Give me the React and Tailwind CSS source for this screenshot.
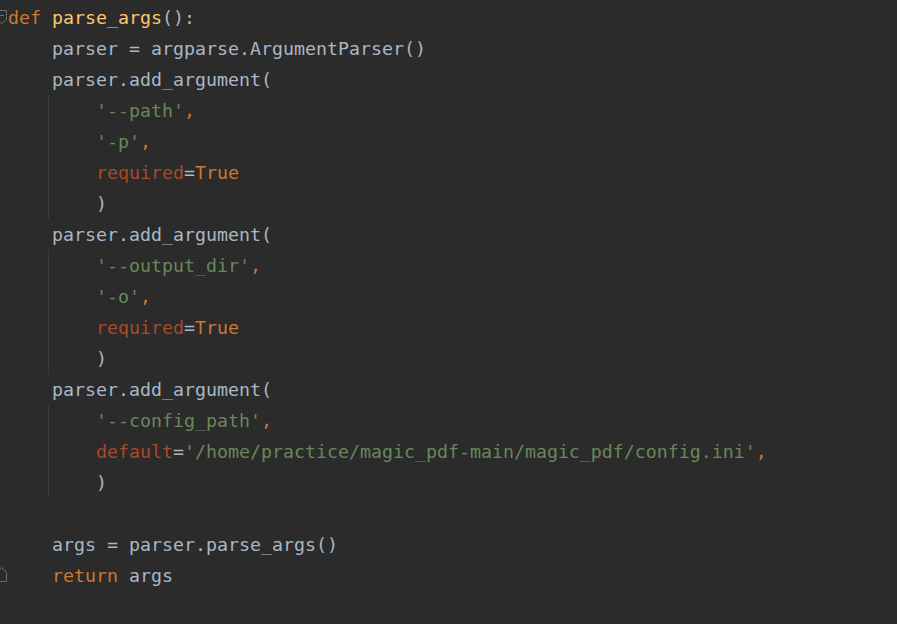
import React from "react";

const K = ({ children }) => <span className="text-[#cc7832]">{children}</span>;
const F = ({ children }) => <span className="text-[#ffc66d]">{children}</span>;
const S = ({ children }) => <span className="text-[#6a8759]">{children}</span>;
const P = ({ children }) => <span className="text-[#aa4926]">{children}</span>;

const Line = ({ children }) => (
  <div className="h-[31px] leading-[31px] whitespace-pre">{children}</div>
);

const Block = ({ children }) => (
  <div className="ml-[40px] border-l border-[#3b3b3b] pl-[47px]">{children}</div>
);

export default function App() {
  return (
    <div
      className="relative w-[897px] h-[624px] overflow-hidden bg-[#2b2b2b] text-[#a9b7c6] text-[18.27px] pt-[2px]"
      style={{ fontFamily: '"DejaVu Sans Mono", monospace' }}
    >
      <svg className="absolute left-0 top-[9px]" width="8" height="16" viewBox="0 0 8 16">
        <path d="M-3 1.5 H6.5 V10.5 L1.75 14.5 L-3 10.5 Z" fill="none" stroke="#6e6e6e" strokeWidth="1" />
        <path d="M0 6.5 H4" stroke="#6e6e6e" strokeWidth="1" />
      </svg>
      <svg className="absolute left-0 top-[566px]" width="8" height="17" viewBox="0 0 8 17">
        <path d="M-3 15.5 H6.5 V6.5 L1.75 1.5 L-3 6.5 Z" fill="none" stroke="#6e6e6e" strokeWidth="1" />
      </svg>
      <div className="pl-[8px]">
        <Line>
          <K>def</K> <F>parse_args</F>():
        </Line>
        <div className="pl-[44px]">
          <Line>parser = argparse.ArgumentParser()</Line>
          <Line>parser.add_argument(</Line>
        </div>
        <Block>
          <Line>
            <S>'--path'</S>
            <K>,</K>
          </Line>
          <Line>
            <S>'-p'</S>
            <K>,</K>
          </Line>
          <Line>
            <P>required</P>=<K>True</K>
          </Line>
          <Line>)</Line>
        </Block>
        <div className="pl-[44px]">
          <Line>parser.add_argument(</Line>
        </div>
        <Block>
          <Line>
            <S>'--output_dir'</S>
            <K>,</K>
          </Line>
          <Line>
            <S>'-o'</S>
            <K>,</K>
          </Line>
          <Line>
            <P>required</P>=<K>True</K>
          </Line>
          <Line>)</Line>
        </Block>
        <div className="pl-[44px]">
          <Line>parser.add_argument(</Line>
        </div>
        <Block>
          <Line>
            <S>'--config_path'</S>
            <K>,</K>
          </Line>
          <Line>
            <P>default</P>=<S>'/home/practice/magic_pdf-main/magic_pdf/config.ini'</S>
            <K>,</K>
          </Line>
          <Line>)</Line>
        </Block>
        <div className="pl-[44px]">
          <Line> </Line>
          <Line>args = parser.parse_args()</Line>
          <Line>
            <K>return</K> args
          </Line>
        </div>
      </div>
    </div>
  );
}
